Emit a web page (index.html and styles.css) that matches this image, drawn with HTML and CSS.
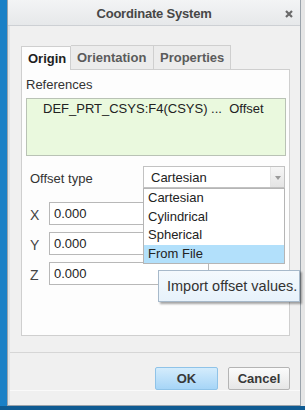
FILE: index.html
```html
<!DOCTYPE html>
<html>

<head>
    <title>Coordinate System</title>
    <meta name="viewport" content="width=device-width,initial-scale=1">
    <link rel="stylesheet" href="styles.css">
</head>

<body>
    <div class="dialog">
        <div class="titlebar">
            <span class="title">Coordinate System</span>
            <svg class="close" viewBox="0 0 8 8" width="8" height="8">
                <path d="M1 1 L7 7 M7 1 L1 7" />
            </svg>
        </div>

        <div class="content">
            <div class="tabs">
                <div class="tab active">Origin</div>
                <div class="tab">Orientation</div>
                <div class="tab">Properties</div>
            </div>

            <div class="panel">
                <div class="label">References</div>
                <div class="refbox">DEF_PRT_CSYS:F4(CSYS) ...&nbsp;&nbsp;Offset</div>

                <div class="typerow">
                    <span class="typelabel">Offset type</span>
                    <div class="combo">
                        <span class="combotext">Cartesian</span>
                        <span class="arrow"></span>
                        <!-- open list sits over the fields -->
                        <ul class="droplist">
                            <li>Cartesian</li>
                            <li>Cylindrical</li>
                            <li>Spherical</li>
                            <li class="hover">From File</li>
                        </ul>
                    </div>
                </div>

                <div class="fields">
                    <div class="field"><span class="axis">X</span><div class="input">0.000</div></div>
                    <div class="field"><span class="axis">Y</span><div class="input">0.000</div></div>
                    <div class="field"><span class="axis">Z</span><div class="input">0.000</div></div>
                    <div class="tooltip">Import offset values.</div>
                </div>
            </div>
        </div>

        <div class="footer">
            <button class="btn ok">OK</button>
            <button class="btn">Cancel</button>
        </div>
    </div>
</body>

</html>
```

FILE: styles.css
```css
html,
body {
    margin: 0;
    height: 100%;
}

body {
    font-family: "Liberation Sans", Arial, sans-serif;
    font-size: 13px;
    color: #333;
    /* desktop behind the dialog */
    background:
        linear-gradient(#0f5b92, #0f5b92) 0 406px / 100% 4px no-repeat,
        linear-gradient(#1a80c6, #1a80c6) 0 0 / 301px 100% no-repeat,
        #e6e6e6;
    overflow: hidden;
}

.dialog {
    margin-left: 7px;
    width: 294px;
    height: 406px;
    box-sizing: border-box;
    background-color: #f0f0f0;
    border: 1px solid #9aa3ab;
    border-top: none;
    box-shadow: inset 2px 0 0 #dfe2e5;
    display: flex;
    flex-direction: column;
}

.titlebar {
    height: 26px;
    box-sizing: border-box;
    border-bottom: 1px solid #cdd0d4;
    background: linear-gradient(#f3f4f5, #e6e8ea);
    display: flex;
    align-items: center;
    justify-content: center;
    position: relative;
}

.title {
    font-weight: bold;
    color: #474747;
    font-size: 13px;
    letter-spacing: -0.2px;
    padding-top: 2px;
}

.close {
    position: absolute;
    right: 7px;
    top: 10px;
    stroke: #6a6a6a;
    stroke-width: 2.2;
    fill: none;
}

.content {
    padding: 19px 10px 0 13px;
}

/* tab strip */
.tabs {
    display: flex;
    height: 24px;
}

.tab {
    font-weight: bold;
    color: #5b5b5b;
    padding: 0 6px;
    line-height: 24px;
    background-color: #ececec;
    border: 1px solid #cfcfcf;
    border-bottom: none;
    border-left: none;
    box-sizing: border-box;
}

.tab:nth-child(2) {
    width: 83px;
}

.tab:nth-child(3) {
    width: 77px;
}

.tab.active {
    color: #1e1e1e;
    background-color: #fdfdfd;
    border-left: 1px solid #cfcfcf;
    width: 50px;
    position: relative;
    top: 1px;
}

.panel {
    background-color: #fdfdfd;
    border: 1px solid #cfcfcf;
    height: 267px;
    box-sizing: border-box;
    padding: 7px 3px 0 4px;
}

.label {
    line-height: 16px;
}

.refbox {
    margin-top: 5px;
    background-color: #eaf9de;
    border: 1px solid #b9c2b5;
    padding: 2px 0 0 16px;
    line-height: 16px;
    box-sizing: border-box;
    height: 58px;
    color: #222;
}

.typerow {
    margin-top: 10px;
    display: flex;
    align-items: center;
    padding-left: 4px;
}

.typelabel {
    width: 113px;
    padding-top: 3px;
}

.combo {
    position: relative;
    width: 142px;
    height: 22px;
    box-sizing: border-box;
    border: 1px solid #c2c2c2;
    background-color: #fff;
    display: flex;
    align-items: center;
}

.combotext {
    flex: 1;
    padding-left: 7px;
    color: #222;
}

.arrow {
    width: 13px;
    height: 20px;
    border-left: 1px solid #e4e4e4;
    background: linear-gradient(#f6f6f6, #e4e4e4);
    position: relative;
}

.arrow::after {
    content: "";
    position: absolute;
    left: 4px;
    top: 9px;
    border-left: 3px solid transparent;
    border-right: 3px solid transparent;
    border-top: 4px solid #9a9a9a;
}

.droplist {
    position: absolute;
    left: -1px;
    top: 21px;
    width: 142px;
    margin: 0;
    padding: 0;
    list-style: none;
    background-color: #fff;
    border: 1px solid #b5b5b5;
    box-sizing: border-box;
    z-index: 2;
}

.droplist li {
    height: 18.5px;
    line-height: 18.5px;
    padding-left: 4px;
    color: #222;
}

.droplist li.hover {
    background-color: #b2e0fb;
}

.fields {
    position: relative;
    margin-top: 14px;
    display: flex;
    flex-direction: column;
    gap: 7px;
}

.field {
    display: flex;
    align-items: center;
    padding-left: 4px;
}

.axis {
    width: 19px;
    padding-top: 3px;
    font-size: 14px;
    color: #444;
}

.input {
    width: 160px;
    height: 23px;
    box-sizing: border-box;
    border: 1px solid #b8b8b8;
    background-color: #fff;
    line-height: 21px;
    padding-left: 4px;
    color: #222;
}

.tooltip {
    position: absolute;
    left: 132px;
    top: 68px;
    width: 142px;
    height: 32px;
    box-sizing: border-box;
    background: linear-gradient(#f4f9fd, #e7f2fb);
    border: 1px solid #a7b9ca;
    box-shadow: 2px 2px 2px rgba(0, 0, 0, 0.35);
    font-size: 14.5px;
    line-height: 30px;
    padding-left: 8px;
    white-space: nowrap;
    color: #333;
    z-index: 3;
}

.footer {
    margin-top: 16px;
    border-top: 1px solid #d6d6d6;
    box-shadow: 0 1px 0 #fafafa;
    margin-left: 2px;
    display: flex;
    justify-content: flex-end;
    gap: 10px;
    padding: 14px 10px 0 0;
}

.btn {
    font-family: inherit;
    font-size: 13px;
    font-weight: bold;
    color: #383838;
    width: 62px;
    height: 23px;
    border: 1px solid #b4b4b4;
    border-radius: 2px;
    background: linear-gradient(#fbfbfb, #e6e6e6);
    padding: 0;
}

.btn.ok {
    width: 63px;
    border-color: #8fc3e8;
    background: linear-gradient(#d4ecfc, #a6d5f7);
}
```
